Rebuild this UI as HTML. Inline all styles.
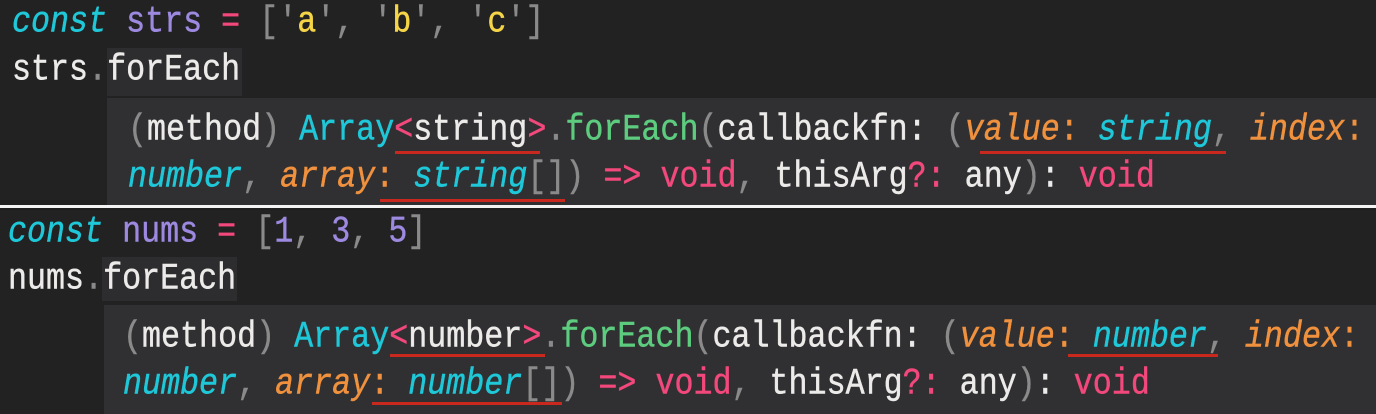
<!DOCTYPE html>
<html><head><meta charset="utf-8"><style>
*{margin:0;padding:0}
body{width:1376px;height:414px;background:#1e1e1f;position:relative;overflow:hidden;font-family:"Liberation Mono",monospace;font-size:31.7px;color:#ecebe9}
.p{position:absolute;left:0;width:1376px;background:#222223}
.hv{position:absolute;background:#303033}
.hl{position:absolute;background:#2d2d2f}
.l{position:absolute;white-space:pre;line-height:48px;height:48px;transform:scaleY(1.17);transform-origin:50% 50%;-webkit-text-stroke:0.4px currentColor}
.u{position:absolute;height:3px;background:#c8281e}
.c{color:#1fc8d8}.i{font-style:italic}.pu{color:#9d89e0}.pk{color:#f2487c}.y{color:#f5d547}.g{color:#8a8a8a}.gr{color:#5dcc7f}.o{color:#f0913e}
</style></head><body>
<div class="p" style="top:0;height:205px"></div>
<div style="position:absolute;top:205px;left:0;width:1376px;height:3px;background:#f4f4f4"></div>
<div class="p" style="top:210px;height:204px"></div>

<div class="hl" style="left:107px;top:48px;width:135px;height:48px"></div>
<div class="hv" style="left:107px;top:98px;width:1269px;height:107px"></div>
<div class="hl" style="left:102px;top:257px;width:135px;height:44px"></div>
<div class="hv" style="left:104px;top:305px;width:1272px;height:109px"></div>

<div class="l" style="left:12px;top:-2px"><span class="c i">const</span> <span class="pu">strs</span> <span class="pk">=</span> <span class="g">[</span><span class="g">'</span><span class="y">a</span><span class="g">', '</span><span class="y">b</span><span class="g">', '</span><span class="y">c</span><span class="g">']</span></div>
<div class="l" style="left:12px;top:46px">strs<span class="g">.</span>forEach</div>
<div class="l" style="left:128px;top:106px"><span class="g">(</span>method<span class="g">)</span> <span class="c">Array</span><span class="pk">&lt;</span>string<span class="pk">&gt;</span><span class="g">.</span><span class="gr">forEach</span><span class="g">(</span>callbackfn: <span class="g">(</span><span class="o i">value</span><span class="o">:</span> <span class="c i">string</span><span class="g">,</span> <span class="o i">index</span><span class="o">:</span></div>
<div class="l" style="left:128px;top:153px"><span class="c i">number</span><span class="g">,</span> <span class="o i">array</span><span class="o">:</span> <span class="c i">string</span><span class="g">[]</span><span class="g">)</span> <span class="pk">=&gt;</span> <span class="pk">void</span><span class="g">,</span> thisArg<span class="pk">?:</span> any<span class="g">)</span>: <span class="pk">void</span></div>
<div class="u" style="left:395px;top:151px;width:145px"></div>
<div class="u" style="left:980px;top:151px;width:246px"></div>
<div class="u" style="left:380px;top:199px;width:185px"></div>

<div class="l" style="left:8px;top:208px"><span class="c i">const</span> <span class="pu">nums</span> <span class="pk">=</span> <span class="g">[</span><span class="pu">1</span><span class="g">,</span> <span class="pu">3</span><span class="g">,</span> <span class="pu">5</span><span class="g">]</span></div>
<div class="l" style="left:8px;top:255px">nums<span class="g">.</span>forEach</div>
<div class="l" style="left:123px;top:313px"><span class="g">(</span>method<span class="g">)</span> <span class="c">Array</span><span class="pk">&lt;</span>number<span class="pk">&gt;</span><span class="g">.</span><span class="gr">forEach</span><span class="g">(</span>callbackfn: <span class="g">(</span><span class="o i">value</span><span class="o">:</span> <span class="c i">number</span><span class="g">,</span> <span class="o i">index</span><span class="o">:</span></div>
<div class="l" style="left:123px;top:360px"><span class="c i">number</span><span class="g">,</span> <span class="o i">array</span><span class="o">:</span> <span class="c i">number</span><span class="g">[]</span><span class="g">)</span> <span class="pk">=&gt;</span> <span class="pk">void</span><span class="g">,</span> thisArg<span class="pk">?:</span> any<span class="g">)</span>: <span class="pk">void</span></div>
<div class="u" style="left:390px;top:354px;width:155px"></div>
<div class="u" style="left:1068px;top:354px;width:150px"></div>
<div class="u" style="left:372px;top:402px;width:190px"></div>
</body></html>
